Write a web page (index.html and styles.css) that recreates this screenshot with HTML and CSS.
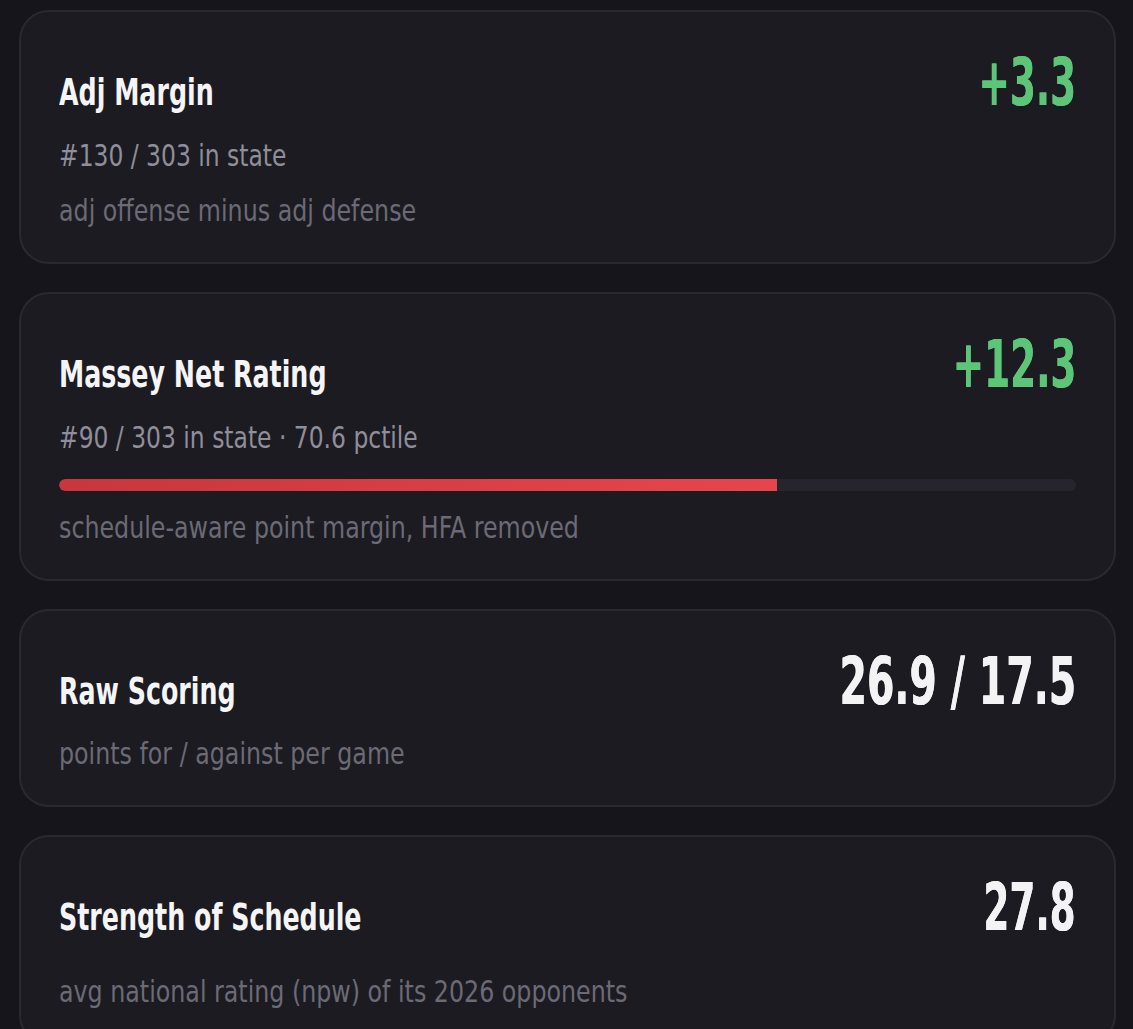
FILE: index.html
```html
<!DOCTYPE html>
<html lang="en">
<head>
<meta charset="utf-8">
<title>Team metrics</title>
<link rel="stylesheet" href="styles.css">
</head>
<body>
<main class="list">
  <section class="card">
    <div class="head">
      <h2 class="title">Adj Margin</h2>
      <div class="value value-pos">+3.3</div>
    </div>
    <div class="sub"><span class="narrow">#130 / 303 in state</span></div>
    <div class="desc"><span class="narrow">adj offense minus adj defense</span></div>
  </section>

  <section class="card">
    <div class="head">
      <h2 class="title">Massey Net Rating</h2>
      <div class="value value-pos">+12.3</div>
    </div>
    <div class="sub"><span class="narrow">#90 / 303 in state · 70.6 pctile</span></div>
    <div class="bar"><div class="bar-fill" style="width:70.6%"></div></div>
    <div class="desc desc-after-bar"><span class="narrow">schedule-aware point margin, HFA removed</span></div>
  </section>

  <section class="card">
    <div class="head">
      <h2 class="title">Raw Scoring</h2>
      <div class="value value-wide">26.9 / 17.5</div>
    </div>
    <div class="desc desc-after-head"><span class="narrow">points for / against per game</span></div>
  </section>

  <section class="card">
    <div class="head">
      <h2 class="title">Strength of Schedule</h2>
      <div class="value">27.8</div>
    </div>
    <div class="desc desc-spaced"><span class="narrow">avg national rating (npw) of its 2026 opponents</span></div>
  </section>
</main>
</body>
</html>
```
FILE: styles.css
```css
* { box-sizing: border-box; }

html, body {
  margin: 0;
  background: #16151b;
}

body {
  font-family: "DejaVu Sans Condensed", "DejaVu Sans", sans-serif;
  color: #f3f3f6;
}

.list {
  display: flex;
  flex-direction: column;
  gap: 28px;
  padding: 10px 17px 20px 19px;
}

.card {
  background: #1c1b21;
  border: 2px solid #2a2930;
  border-radius: 30px;
  padding: 40px 38px 33px 38px;
}

.head {
  display: flex;
  justify-content: space-between;
  align-items: baseline;
}

.title {
  margin: 0;
  font-size: 38px;
  line-height: 40px;
  font-weight: 700;
  color: #f5f5f7;
  white-space: nowrap;
  transform: scaleX(0.74);
  transform-origin: left center;
}

.value {
  font-size: 66px;
  line-height: 62px;
  font-weight: 700;
  color: #f3f3f6;
  white-space: nowrap;
  transform: scaleX(0.63);
  transform-origin: right center;
  text-shadow: 0.6px 0 0 currentColor;
}

.value-wide { transform: scaleX(0.665); }

.value-pos { color: #5dc577; }

.narrow {
  display: inline-block;
  white-space: nowrap;
  transform-origin: left center;
}

.sub {
  margin-top: 23px;
  font-size: 31px;
  line-height: 36px;
  color: #8f8e9a;
}

.sub .narrow { transform: scaleX(0.84); }

.desc {
  margin-top: 20px;
  font-size: 30px;
  line-height: 36px;
  color: #6b6a76;
}

.desc .narrow { transform: scaleX(0.88); }

.desc-after-head { margin-top: 23px; }
.desc-spaced { margin-top: 35px; }
.desc-after-bar { margin-top: 19px; }

.bar {
  margin-top: 24px;
  height: 12px;
  border-radius: 6px;
  background: #26252d;
  overflow: hidden;
}

.bar-fill {
  height: 100%;
  border-radius: 6px 0 0 6px;
  background: linear-gradient(90deg, #c7373b 0%, #e6464b 100%);
}
```
